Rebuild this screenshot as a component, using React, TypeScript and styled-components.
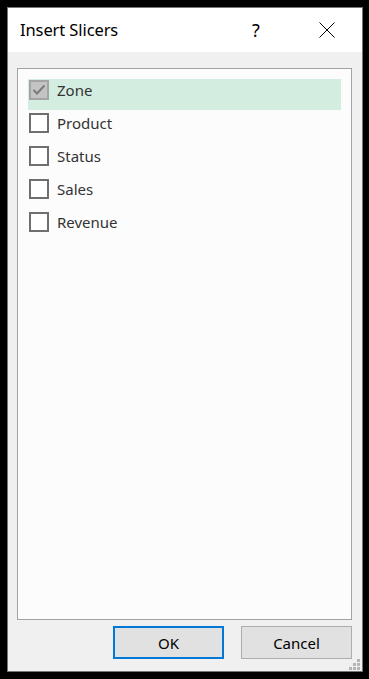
import React from "react";
import styled, { createGlobalStyle } from "styled-components";

const Global = createGlobalStyle`
  html, body { margin: 0; padding: 0; background: #000; }
  body { font-family: "Noto Sans", "Open Sans", sans-serif; }
  * { box-sizing: border-box; }
`;

const Dialog = styled.div`
  margin: 7px 0 0 7px;
  width: 356px;
  height: 665px;
  border: 1px solid #767676;
  display: flex;
  flex-direction: column;
  position: relative;
  background: #f0f0f0;
`;

const TitleBar = styled.div`
  height: 44px;
  background: #fff;
  display: flex;
  align-items: center;
  padding-left: 12px;
`;

const Title = styled.div`
  flex: 1;
  font-size: 16.5px;
  color: #000;
  letter-spacing: -0.1px;
  margin-top: -1px;
`;

const Help = styled.div`
  width: 20px;
  font-size: 18px;
  color: #000;
  margin-right: 53px;
  text-align: center;
`;

const Close = styled.div`
  width: 16px;
  height: 16px;
  margin-right: 27px;
  display: flex;
`;

const Body = styled.div`
  flex: 1;
  display: flex;
  flex-direction: column;
  padding: 16px 10px 0 9px;
`;

const Panel = styled.div`
  flex: 1;
  background: #fcfcfc;
  border: 1px solid #a3a3a3;
  padding: 10px;
  display: flex;
  flex-direction: column;
  gap: 2px;
`;

const Row = styled.div<{ $active?: boolean }>`
  height: 31px;
  display: flex;
  align-items: flex-start;
  padding: 1px 0 0 1px;
  gap: 8px;
  background: ${(p) => (p.$active ? "#d3eee0" : "transparent")};
`;

const Box = styled.div<{ $checked?: boolean }>`
  width: 20px;
  height: 20px;
  border: 2px solid ${(p) => (p.$checked ? "#a4a4a4" : "#6f6f6f")};
  background: ${(p) => (p.$checked ? "#c4c4c4" : "#fff")};
  display: flex;
  align-items: center;
  justify-content: center;
`;

const Label = styled.div`
  font-size: 15px;
  line-height: 20px;
  color: #333;
`;

const Footer = styled.div`
  display: flex;
  justify-content: flex-end;
  gap: 17px;
  padding: 6px 0 12px;
`;

const Button = styled.div<{ $primary?: boolean }>`
  width: 111px;
  height: 33px;
  background: #e1e1e1;
  border: ${(p) => (p.$primary ? "2px solid #0078d7" : "1px solid #adadad")};
  display: flex;
  align-items: center;
  justify-content: center;
  font-size: 15px;
  color: #000;
`;

const Grip = styled.div`
  position: absolute;
  right: 2px;
  bottom: 1px;
  width: 11px;
  height: 11px;
  display: grid;
  grid-template-columns: repeat(3, 3px);
  grid-template-rows: repeat(3, 3px);
  gap: 1px;
`;

const Dot = styled.div<{ $on?: boolean }>`
  background: ${(p) => (p.$on ? "#b4b4b4" : "transparent")};
`;

const fields = ["Zone", "Product", "Status", "Sales", "Revenue"];

export default function App() {
  const dots = [0, 0, 1, 0, 1, 1, 1, 1, 1];
  return (
    <>
      <Global />
      <Dialog>
        <TitleBar>
          <Title>Insert Slicers</Title>
          <Help>?</Help>
          <Close>
            <svg width="16" height="16" viewBox="0 0 16 16">
              <path d="M0.5 0.5 L15.5 15.5 M15.5 0.5 L0.5 15.5" stroke="#000" strokeWidth="1" fill="none" />
            </svg>
          </Close>
        </TitleBar>
        <Body>
          <Panel>
            {fields.map((f, i) => (
              <Row key={f} $active={i === 0}>
                <Box $checked={i === 0}>
                  {i === 0 && (
                    <svg width="14" height="12" viewBox="0 0 14 12">
                      <path d="M1.5 6 L5 9.5 L12.5 1.5" stroke="#7a7a7a" strokeWidth="2" fill="none" />
                    </svg>
                  )}
                </Box>
                <Label>{f}</Label>
              </Row>
            ))}
          </Panel>
          <Footer>
            <Button $primary>OK</Button>
            <Button>Cancel</Button>
          </Footer>
        </Body>
        <Grip>
          {dots.map((d, i) => (
            <Dot key={i} $on={d === 1} />
          ))}
        </Grip>
      </Dialog>
    </>
  );
}
